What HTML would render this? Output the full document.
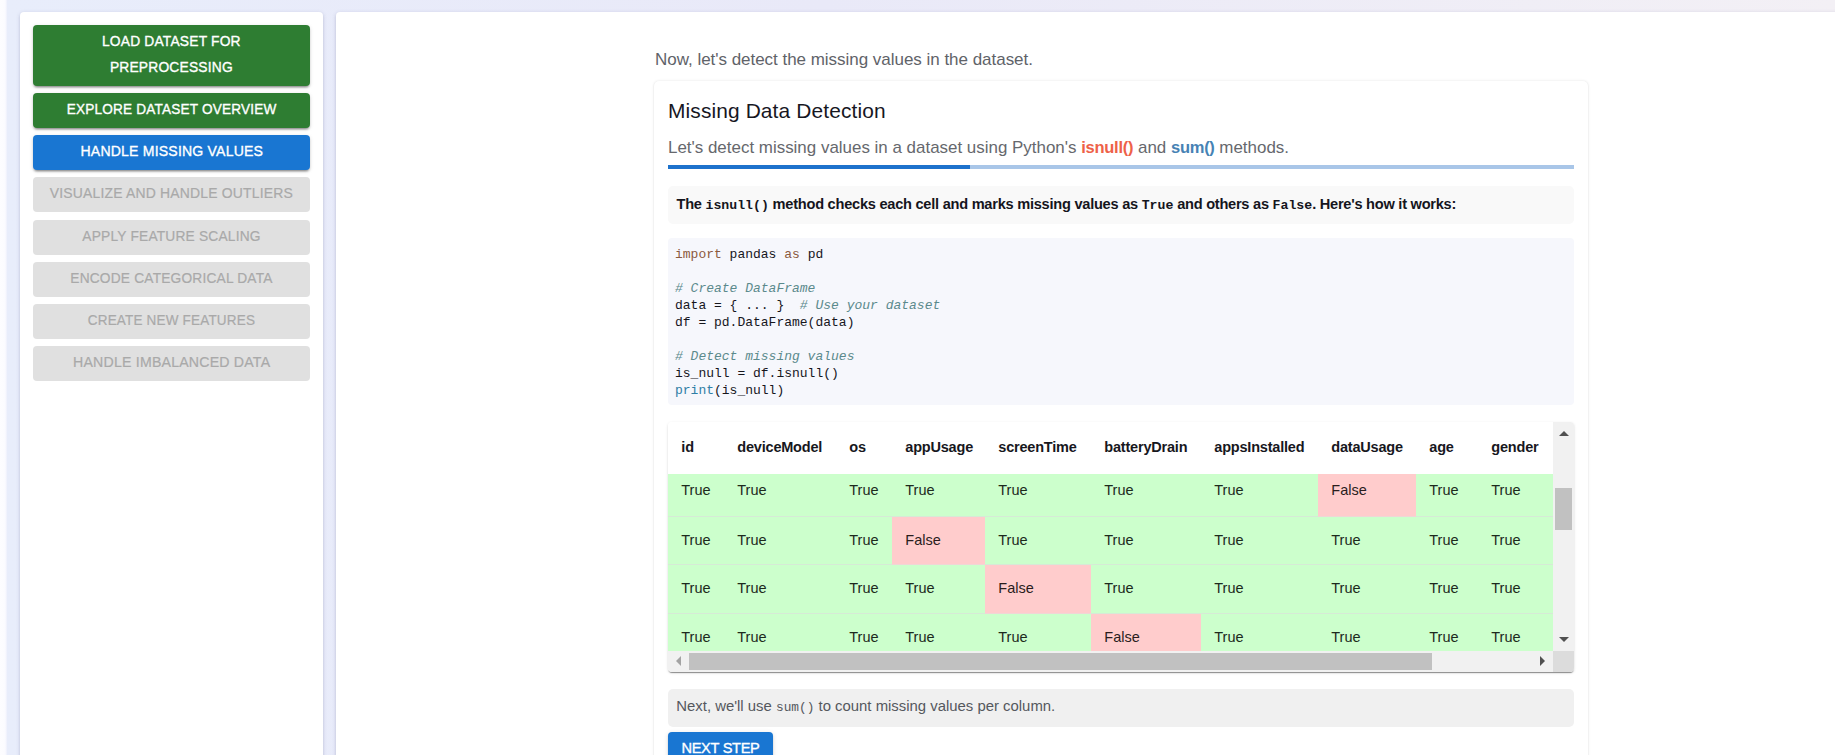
<!DOCTYPE html>
<html lang="en">
<head>
<meta charset="utf-8">
<title>Data Preprocessing Tutorial</title>
<style>
  * { box-sizing: border-box; }
  html, body { margin: 0; padding: 0; }
  body {
    width: 1835px; height: 755px; overflow: hidden; position: relative;
    font-family: "Liberation Sans", Arial, sans-serif;
    background: linear-gradient(90deg, #e8edfb 0%, #e9e9f8 45%, #f3f0f5 100%);
    color: #1c1c1c;
  }
  .strip { position: absolute; left: 0; top: 0; width: 7px; height: 755px; background: linear-gradient(90deg,#fdfdff 0,#fbfbff 5px,#eef0fc 7px); }

  /* ---------- sidebar ---------- */
  .sidebar {
    position: absolute; left: 20px; top: 12px; width: 303px; height: 800px;
    background: #fff; border-radius: 4px;
    box-shadow: 0 2px 3px -1px rgba(60,60,110,.28), 0 1px 4px rgba(60,60,110,.18);
    padding: 13px 13px 0 13px;
  }
  .sbtn {
    display: flex; align-items: center; justify-content: center; text-align: center;
    width: 277px; height: 35px; margin: 0 0 7px 0; border: 0; border-radius: 4px;
    font-family: inherit; font-size: 14.6px; line-height: 25.6px; letter-spacing: .2px;
    color: #fff; background: #2e7d32; text-transform: uppercase;
    -webkit-text-stroke: .35px currentColor;
    box-shadow: 0 3px 2px -2px rgba(0,0,0,.28), 0 2px 2px rgba(0,0,0,.16), 0 1px 4px rgba(0,0,0,.12);
    padding: 0;
  }
  .sbtn.tall { height: 61px; }
  .sbtn:nth-child(4) { margin-bottom: 8px; }
  .sbtn.active { background: #1976d2; }
  .sbtn.disabled { background: #e0e0e0; color: #a9a9a9; box-shadow: none; -webkit-text-stroke: .2px currentColor; }
  .sbtn span { display: inline-block; white-space: nowrap; position: relative; top: -0.5px; }
  .sbtn:nth-child(1) span { transform: scaleX(0.9461); }
  .sbtn:nth-child(2) span { transform: scaleX(0.9320); }
  .sbtn:nth-child(3) span { transform: scaleX(0.9631); }
  .sbtn:nth-child(4) span { transform: scaleX(0.9553); }
  .sbtn:nth-child(5) span { transform: scaleX(0.9434); }
  .sbtn:nth-child(6) span { transform: scaleX(0.9414); }
  .sbtn:nth-child(7) span { transform: scaleX(0.9253); }
  .sbtn:nth-child(8) span { transform: scaleX(0.9700); }

  /* ---------- main ---------- */
  .main {
    position: absolute; left: 336px; top: 12px; width: 1520px; height: 800px;
    background: #fff; border-radius: 4px 0 0 0;
    box-shadow: 0 2px 3px -1px rgba(60,60,110,.28), 0 1px 4px rgba(60,60,110,.18);
  }
  .intro {
    position: absolute; left: 319px; top: 37px; margin: 0; white-space: nowrap;
    font-size: 17px; line-height: 22px; color: #5f6369; letter-spacing: -0.027px;
  }
  .card {
    position: absolute; left: 318px; top: 69px; width: 934px; height: 760px;
    background: #fff; border-radius: 5px;
    box-shadow: 0 0 3px rgba(0,0,0,.11), 0 1px 2px rgba(0,0,0,.07);
  }
  .card h2 {
    position: absolute; left: 14px; top: 17px; margin: 0; white-space: nowrap;
    font-size: 20.9px; line-height: 26px; font-weight: 400; color: #17171f; letter-spacing: .13px;
  }
  .sub {
    position: absolute; left: 14px; top: 55px; margin: 0; white-space: nowrap;
    font-size: 16.95px; line-height: 22px; color: #66686d;
  }
  .sub .k1 { color: #ee6148; font-weight: 700; font-size: 16.5px; letter-spacing: -.25px; }
  .sub .k2 { color: #4682b4; font-weight: 700; font-size: 16.5px; letter-spacing: -.25px; }
  .progress { position: absolute; left: 14px; top: 84px; width: 906px; height: 4px; background: #a9c6e8; }
  .progress i { display: block; width: 302px; height: 4px; background: #1d72cc; }

  .info {
    position: absolute; left: 14px; top: 104.5px; width: 906px; height: 38px;
    background: #f9f9f9; border-radius: 5px; padding: 0 0 0 8.5px;
    font-size: 14.6px; line-height: 37px; font-weight: 700; color: #15151d; white-space: nowrap; letter-spacing: -0.25px;
  }
  code, pre { font-family: "Liberation Mono", "DejaVu Sans Mono", monospace; }
  .info code { font-size: 13.2px; font-weight: 700; letter-spacing: 0; }

  pre.code {
    position: absolute; left: 14px; top: 157px; width: 906px; height: 167px; margin: 0;
    background: #f6f7fc; border-radius: 4px; padding: 7.5px 0 0 7px;
    font-size: 13px; line-height: 17px; color: #16161c; overflow: hidden;
  }
  .kw { color: #8c5a3e; }
  .cm { color: #5b8a8c; font-style: italic; }
  .bi { color: #2f7ea6; }

  /* ---------- table ---------- */
  .tablewrap {
    position: absolute; left: 14px; top: 341px; width: 906px; height: 250px;
    background: #fff; border-radius: 4px; overflow: hidden;
    box-shadow: 0 2px 1px -1px rgba(0,0,0,.30), 0 1px 1px rgba(0,0,0,.14), 0 1px 3px rgba(0,0,0,.12);
  }
  .tscroll { position: absolute; left: 0; top: 0; width: 885px; height: 229px; overflow: hidden; }
  table { border-collapse: separate; border-spacing: 0; table-layout: fixed; width: 960px; position: absolute; left: 0; top: 0; }
  th, td { padding: 0 0 0 13.3px; text-align: left; white-space: nowrap; overflow: hidden; font-size: 14.5px; }
  th { height: 52px; letter-spacing: -.2px; font-weight: 700; color: #17171d; background: #fff; padding-top: 0; }
  th span { display:inline-block; position: relative; top: -1.5px; }
  td { height: 48.6px; background: #ccffcc; color: #1d2a1d; border-bottom: 1px solid #d6ead6; }
  tbody td { padding-bottom: 1px; }
  tbody tr.first td { height: 43.4px; padding-bottom: 0; }
  tbody tr:nth-child(2) td { height: 47.6px; }
  tr.first td span { position: relative; top: -5.4px; }
  td.f { background: #ffcccc; color: #2a1d1d; border-bottom-color: #f0d6d6; }

  .vbar { position: absolute; left: 885px; top: 0; width: 21px; height: 229px; background: #f1f1f1; }
  .vbar .thumb { position: absolute; left: 2.3px; top: 66px; width: 16.5px; height: 42px; background: #c1c1c1; }
  .hbar { position: absolute; left: 0; top: 229px; width: 885px; height: 21px; background: #f1f1f1; }
  .hbar .thumb { position: absolute; left: 21.3px; top: 2.2px; width: 742.5px; height: 16.5px; background: #c1c1c1; }
  .corner { position: absolute; left: 885px; top: 229px; width: 21px; height: 21px; background: #dcdcdc; }
  .arr { position: absolute; width: 0; height: 0; border: 5px solid transparent; }
  .arr.up { left: 5.5px; top: 9px; border-top: 0; border-bottom: 5.2px solid #505050; }
  .arr.down { left: 5.5px; top: 215px; border-bottom: 0; border-top: 5.2px solid #505050; }
  .arr.left { left: 8px; top: 5.3px; border-left: 0; border-right: 5.2px solid #a3a3a3; }
  .arr.right { left: 872px; top: 5.3px; border-right: 0; border-left: 5.2px solid #505050; }

  .note {
    position: absolute; left: 14px; top: 608px; width: 906px; height: 38px;
    background: #f0f0f0; border-radius: 5px; padding: 0 0 0 8.3px;
    font-size: 14.9px; line-height: 34px; color: #55585e; white-space: nowrap;
  }
  .note code { font-size: 12.8px; }
  .next {
    position: absolute; left: 14px; top: 651px; width: 105px; height: 40px;
    background: #1976d2; color: #fff; border: 0; border-radius: 4px; padding: 0 0 9px 0;
    font-family: inherit; font-size: 14.6px; line-height: 24px; text-align: center; letter-spacing: -.3px; display:block;
    -webkit-text-stroke: .35px currentColor;
    box-shadow: 0 3px 1px -2px rgba(0,0,0,.2), 0 2px 2px rgba(0,0,0,.14), 0 1px 5px rgba(0,0,0,.12);
  }
</style>
</head>
<body>
  <div class="strip"></div>

  <nav class="sidebar">
    <button class="sbtn tall"><span>Load Dataset for<br>Preprocessing</span></button>
    <button class="sbtn"><span>Explore Dataset Overview</span></button>
    <button class="sbtn active"><span>Handle Missing Values</span></button>
    <button class="sbtn disabled"><span>Visualize and Handle Outliers</span></button>
    <button class="sbtn disabled"><span>Apply Feature Scaling</span></button>
    <button class="sbtn disabled"><span>Encode Categorical Data</span></button>
    <button class="sbtn disabled"><span>Create New Features</span></button>
    <button class="sbtn disabled"><span>Handle Imbalanced Data</span></button>
  </nav>

  <main class="main">
    <p class="intro">Now, let's detect the missing values in the dataset.</p>

    <section class="card">
      <h2>Missing Data Detection</h2>
      <p class="sub">Let's detect missing values in a dataset using Python's <span class="k1">isnull()</span> and <span class="k2">sum()</span> methods.</p>
      <div class="progress"><i></i></div>

      <div class="info">The <code>isnull()</code> method checks each cell and marks missing values as <code>True</code> and others as <code>False</code>. Here's how it works:</div>

<pre class="code"><span class="kw">import</span> pandas <span class="kw">as</span> pd

<span class="cm"># Create DataFrame</span>
data = { ... }  <span class="cm"># Use your dataset</span>
df = pd.DataFrame(data)

<span class="cm"># Detect missing values</span>
is_null = df.isnull()
<span class="bi">print</span>(is_null)</pre>

      <div class="tablewrap">
        <div class="tscroll">
          <table>
            <colgroup>
              <col style="width:56px"><col style="width:112px"><col style="width:56px"><col style="width:93px"><col style="width:106px">
              <col style="width:110px"><col style="width:117px"><col style="width:98px"><col style="width:62px"><col style="width:150px">
            </colgroup>
            <thead>
              <tr><th><span>id</span></th><th><span>deviceModel</span></th><th><span>os</span></th><th><span>appUsage</span></th><th><span>screenTime</span></th><th><span>batteryDrain</span></th><th><span>appsInstalled</span></th><th><span>dataUsage</span></th><th><span>age</span></th><th><span>gender</span></th></tr>
            </thead>
            <tbody>
              <tr class="first"><td><span>True</span></td><td><span>True</span></td><td><span>True</span></td><td><span>True</span></td><td><span>True</span></td><td><span>True</span></td><td><span>True</span></td><td class="f"><span>False</span></td><td><span>True</span></td><td><span>True</span></td></tr>
              <tr><td>True</td><td>True</td><td>True</td><td class="f">False</td><td>True</td><td>True</td><td>True</td><td>True</td><td>True</td><td>True</td></tr>
              <tr><td>True</td><td>True</td><td>True</td><td>True</td><td class="f">False</td><td>True</td><td>True</td><td>True</td><td>True</td><td>True</td></tr>
              <tr><td>True</td><td>True</td><td>True</td><td>True</td><td>True</td><td class="f">False</td><td>True</td><td>True</td><td>True</td><td>True</td></tr>
            </tbody>
          </table>
        </div>
        <div class="vbar"><div class="arr up"></div><div class="thumb"></div><div class="arr down"></div></div>
        <div class="hbar"><div class="arr left"></div><div class="thumb"></div><div class="arr right"></div></div>
        <div class="corner"></div>
      </div>

      <div class="note">Next, we'll use <code>sum()</code> to count missing values per column.</div>
      <button class="next">NEXT STEP</button>
    </section>
  </main>
</body>
</html>
